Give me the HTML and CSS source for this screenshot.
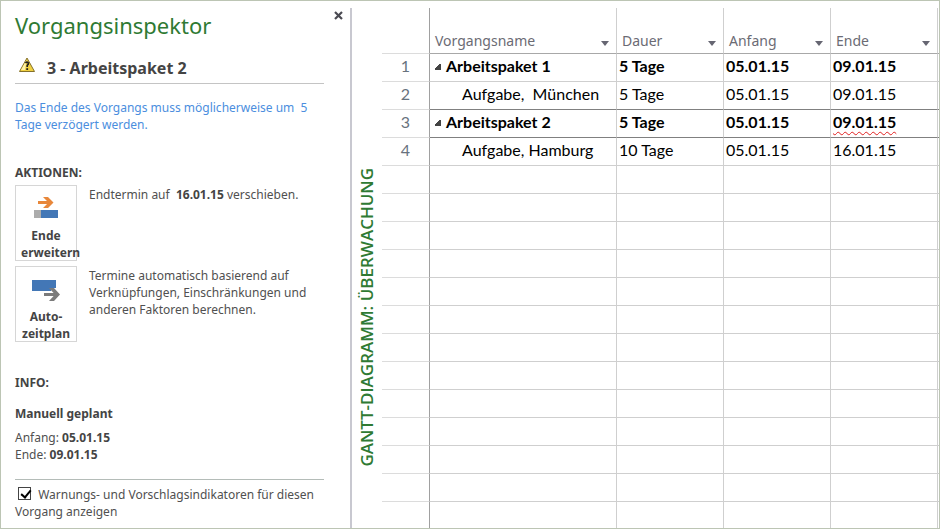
FILE: index.html
```html
<!DOCTYPE html>
<html lang="de">
<head>
  <meta charset="UTF-8" />
  <meta name="viewport" content="width=device-width, initial-scale=1.0" />
  <title>Vorgangsinspektor</title>
  <link rel="stylesheet" href="styles.css">
</head>
<body>

  <!-- Vorgangsinspektor -->
  <aside class="inspector">
    <button class="close" aria-label="Schließen">
      <svg width="9" height="9" viewBox="0 0 9 9"><path d="M1 1L8 8M8 1L1 8" stroke="#4a4a52" stroke-width="2.2" /></svg>
    </button>
    <h1>Vorgangsinspektor</h1>
    <div class="task">
      <svg width="18" height="16" viewBox="0 0 18 16">
        <path d="M9 1L16.5 14.5H1.5Z" fill="#f0d040" stroke="#85712b" stroke-width="1" stroke-linejoin="round" />
        <path d="M8.5 3L3 13H7Z" fill="#fff3a8" />
        <path d="M7.4 6Q9 4.2 10.4 6Q10.6 7.4 9.2 8.4V10" fill="none" stroke="#222" stroke-width="1.6" />
        <rect x="8.3" y="11.2" width="1.8" height="1.8" fill="#222" />
      </svg>
      <h2>3 - Arbeitspaket 2</h2>
    </div>
    <p class="warning">Das Ende des Vorgangs muss möglicherweise um&nbsp; 5 Tage verzögert werden.</p>

    <h3>AKTIONEN:</h3>
    <div class="action">
      <button class="action-button">
        <svg width="36" height="36" viewBox="0 0 36 36">
          <path d="M10 11.5H22" stroke="#e8873a" stroke-width="3" />
          <path d="M15 6H20L25.5 11.5L20 17H15L20.5 11.5Z" fill="#e8873a" />
          <rect x="6" y="19" width="7" height="8" fill="#acacac" />
          <rect x="13" y="19" width="17" height="8" fill="#4377b6" />
        </svg>
        Ende erweitern
      </button>
      <p>Endtermin auf&nbsp; <b>16.01.15</b> verschieben.</p>
    </div>
    <div class="action">
      <button class="action-button">
        <svg width="36" height="36" viewBox="0 0 36 36">
          <path d="M4 8H28V16H23V19H4Z" fill="#4377b6" />
          <path d="M15 22H29" stroke="#fff" stroke-width="6" />
          <path d="M16 22.5H29" stroke="#7b7b7b" stroke-width="3" />
          <path d="M21 16H26L32 22.5L26 29H21L27 22.5Z" fill="#7b7b7b" />
        </svg>
        Auto-<br>zeitplan
      </button>
      <p>Termine automatisch basierend auf Verknüpfungen, Einschränkungen und anderen Faktoren berechnen.</p>
    </div>

    <h3 class="info-title">INFO:</h3>
    <h4>Manuell geplant</h4>
    <p>Anfang: <b>05.01.15</b><br>Ende: <b>09.01.15</b></p>

    <div class="option">
      <input type="checkbox" id="showIndicators" checked />
      <label for="showIndicators">Warnungs- und Vorschlagsindikatoren für diesen Vorgang anzeigen</label>
    </div>
  </aside>

  <!-- Tabelle -->
  <main class="view">
    <div class="view-name"><span>GANTT-DIAGRAMM: ÜBERWACHUNG</span></div>
    <table>
      <colgroup>
        <col class="col-id"><col><col class="col-data"><col class="col-data"><col class="col-data"><col class="col-rest">
      </colgroup>
      <thead>
        <tr><th></th><th>Vorgangsname</th><th>Dauer</th><th>Anfang</th><th>Ende</th><th></th></tr>
      </thead>
      <tbody>
        <tr class="summary"><td>1</td><td>Arbeitspaket 1</td><td>5 Tage</td><td>05.01.15</td><td>09.01.15</td><td></td></tr>
        <tr class="last"><td>2</td><td>Aufgabe,&nbsp; München</td><td>5 Tage</td><td>05.01.15</td><td>09.01.15</td><td></td></tr>
        <tr class="summary last"><td>3</td><td>Arbeitspaket 2</td><td>5 Tage</td><td>05.01.15</td><td><span class="problem">09.01.15</span></td><td></td></tr>
        <tr><td>4</td><td>Aufgabe, Hamburg</td><td>10 Tage</td><td>05.01.15</td><td>16.01.15</td><td></td></tr>
        <tr><td></td><td></td><td></td><td></td><td></td><td></td></tr>
        <tr><td></td><td></td><td></td><td></td><td></td><td></td></tr>
        <tr><td></td><td></td><td></td><td></td><td></td><td></td></tr>
        <tr><td></td><td></td><td></td><td></td><td></td><td></td></tr>
        <tr><td></td><td></td><td></td><td></td><td></td><td></td></tr>
        <tr><td></td><td></td><td></td><td></td><td></td><td></td></tr>
        <tr><td></td><td></td><td></td><td></td><td></td><td></td></tr>
        <tr><td></td><td></td><td></td><td></td><td></td><td></td></tr>
        <tr><td></td><td></td><td></td><td></td><td></td><td></td></tr>
        <tr><td></td><td></td><td></td><td></td><td></td><td></td></tr>
        <tr><td></td><td></td><td></td><td></td><td></td><td></td></tr>
        <tr><td></td><td></td><td></td><td></td><td></td><td></td></tr>
        <tr><td></td><td></td><td></td><td></td><td></td><td></td></tr>
      </tbody>
    </table>
  </main>

</body>
</html>
```
FILE: styles.css
```css
* {
  box-sizing: border-box;
}

body {
  margin: 0;
  height: 100vh;
  display: flex;
  overflow: hidden;
  border: 1px solid #bcc5b4;
  background-color: white;
  font-family: 'Noto Sans', 'Open Sans', sans-serif;
  font-size: 12px;
  line-height: 17px;
  color: #505050;
}

h1, h2, h3, h4, p {
  margin: 0;
}

b, h2, h3, h4 {
  font-weight: bold;
  color: #444;
}

/* Vorgangsinspektor */
.inspector {
  position: relative;
  flex: 0 0 349px;
  padding: 8px 26px 0 14px;
}

.close {
  position: absolute;
  top: 10px;
  right: 7px;
  padding: 0;
  border: none;
  background: none;
  line-height: 0;
  cursor: pointer;
}

h1 {
  font-size: 22px;
  line-height: 32px;
  font-weight: normal;
  color: #2f7a33;
}

.task {
  display: flex;
  align-items: center;
  gap: 11px;
  margin-top: 12px;
  padding-left: 3px;
  border-bottom: 1px solid #c4c4c4;
}

.task svg {
  margin-bottom: 6px;
}

h2 {
  font-size: 16px;
  line-height: 30px;
}

.warning {
  margin: 15px 0 31px;
  color: #4b8ede;
}

h3 {
  font-size: 12px;
  line-height: 17px;
}

.action {
  display: flex;
  gap: 12px;
  margin: 4px 0 5px;
}

.action p {
  padding-top: 1px;
}

.action-button {
  flex: 0 0 62px;
  min-width: 0;
  height: 76px;
  padding: 5px 5px 0;
  border: 1px solid #d6d6d6;
  background-color: white;
  font: bold 12px/17px 'Noto Sans', 'Open Sans', sans-serif;
  color: #444;
  cursor: pointer;
}

.action-button svg {
  display: block;
  margin: 0 auto;
}

.info-title {
  margin: 32px 0 14px;
}

h4 {
  font-size: 12px;
  margin-bottom: 7px;
}

.option {
  margin-top: 16px;
  padding-top: 6px;
  border-top: 1px solid #b4bcb8;
}

.option input {
  appearance: none;
  width: 13px;
  height: 13px;
  margin: 0 4px 0 3px;
  border: 1px solid #444;
  background-color: white;
  vertical-align: -1px;
}

.option input:checked::before {
  content: '';
  display: block;
  width: 4px;
  height: 8px;
  margin: 0 0 0 4px;
  border: solid #000;
  border-width: 0 2px 2px 0;
  transform: rotate(40deg);
}

/* Tabelle */
.view {
  flex: 1;
  display: flex;
  min-width: 0;
  margin-top: 7px;
  border-left: 2px solid #c8c8d0;
}

.view-name {
  flex: 0 0 30px;
  display: flex;
  justify-content: center;
  padding-top: 160px;
}

.view-name span {
  writing-mode: vertical-rl;
  transform: rotate(180deg);
  height: max-content;
  font-family: 'Open Sans', sans-serif;
  font-size: 17px;
  line-height: 28px;
  font-weight: 600;
  color: #2f7a33;
  white-space: nowrap;
}

table {
  flex: 1;
  table-layout: fixed;
  width: 100%;
  height: max-content;
  border-collapse: separate;
  border-spacing: 0;
}

.col-id {
  width: 48px;
}

.col-data {
  width: 107px;
}

.col-rest {
  width: 1px;
}

th, td {
  padding: 0 0 3px 2px;
  border-right: 1px solid #cfcfcf;
  border-bottom: 1px solid #cfcfcf;
  text-align: left;
  white-space: nowrap;
}

th {
  position: relative;
  height: 46px;
  padding: 20px 0 0 5px;
  border-bottom-color: #a8a8a8;
  font-size: 14px;
  line-height: 25px;
  font-weight: normal;
  color: #6b6b74;
}

th:not(:first-child):not(:last-child)::after {
  content: '';
  position: absolute;
  right: 7px;
  bottom: 7px;
  border: 4px solid transparent;
  border-top: 5px solid #666672;
  border-bottom: none;
}

td {
  height: 28px;
  font-family: Lato, sans-serif;
  font-size: 16px;
  line-height: 24px;
  color: #000;
}

th:first-child, td:first-child {
  padding-left: 0;
  border-right-color: #a0a0a0;
  border-bottom-color: #dcdcdc;
  text-align: center;
  color: #68727e;
}

th:last-child, td:last-child {
  padding: 0;
  border-right: none;
}

td:nth-child(2) {
  padding-left: 32px;
}

.summary td:not(:first-child) {
  font-weight: bold;
}

.summary td:nth-child(2) {
  padding-left: 5px;
}

.summary td:nth-child(2)::before {
  content: '';
  display: inline-block;
  width: 6px;
  height: 6px;
  margin-right: 5px;
  vertical-align: 2px;
  background: linear-gradient(135deg, transparent 40%, #444 40%);
}

.last td:not(:first-child) {
  border-bottom-color: #808080;
}

.problem {
  text-decoration: underline wavy #e02020 1px;
  text-underline-offset: 3px;
}
```
